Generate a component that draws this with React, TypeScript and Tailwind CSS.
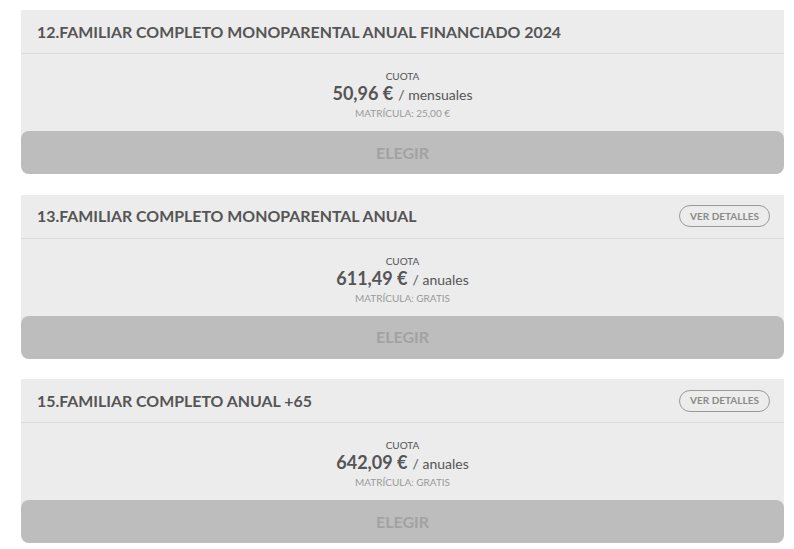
const planes = [
  {
    nombre: "12.FAMILIAR COMPLETO MONOPARENTAL ANUAL FINANCIADO 2024",
    precio: "50,96 €",
    periodo: "/ mensuales",
    matricula: "25,00 €",
    detalles: false,
  },
  {
    nombre: "13.FAMILIAR COMPLETO MONOPARENTAL ANUAL",
    precio: "611,49 €",
    periodo: "/ anuales",
    matricula: "GRATIS",
    detalles: true,
  },
  {
    nombre: "15.FAMILIAR COMPLETO ANUAL +65",
    precio: "642,09 €",
    periodo: "/ anuales",
    matricula: "GRATIS",
    detalles: true,
  },
];

function PlanCard({ plan }: { plan: (typeof planes)[number] }) {
  return (
    <div className="bg-[#ececec] rounded-b-[8px] mb-[20.5px]">
      <div className="h-[44px] flex items-center justify-between pl-[16px] pr-[14px] border-b border-[#dcdcdc]">
        <h3 className="text-[15.9px] font-bold text-[#555]">{plan.nombre}</h3>
        {plan.detalles && (
          <button className="h-[22px] w-[91px] rounded-full border border-[#9a9a9a] text-[10px] font-bold text-[#8a8a8a]">
            VER DETALLES
          </button>
        )}
      </div>

      <div className="h-[77px] flex flex-col items-center pt-[16px]">
        <p className="text-[10px] leading-[12px] text-[#555]">CUOTA</p>
        <p className="leading-[22px] text-[#555]">
          <span className="text-[18px] font-bold">{plan.precio}</span>
          <span className="text-[14px] ml-[5px]">{plan.periodo}</span>
        </p>
        <p className="text-[10px] leading-[14px] text-[#9a9a9a]">
          MATRÍCULA: {plan.matricula}
        </p>
      </div>

      <button className="w-full h-[43px] rounded-[8px] bg-[#bdbdbd] text-[16px] font-bold text-[#a2a2a2]">
        ELEGIR
      </button>
    </div>
  );
}

export default function App() {
  return (
    <div
      className="w-[794px] h-[549px] overflow-hidden bg-white pt-[10px] pl-[21px] pr-[10px]"
      style={{ fontFamily: "Lato, 'Open Sans', sans-serif" }}
    >
      {planes.map((plan) => (
        <PlanCard key={plan.nombre} plan={plan} />
      ))}
    </div>
  );
}
